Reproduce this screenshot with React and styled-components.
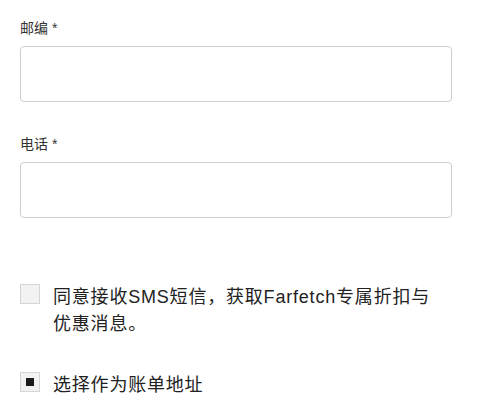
import React from "react";
import styled, { createGlobalStyle } from "styled-components";

const Global = createGlobalStyle`
  html, body { margin: 0; padding: 0; background: #fff; }
  body {
    font-family: "Liberation Sans", "Noto Sans CJK SC", sans-serif;
    color: #222;
  }
`;

const Page = styled.div`
  padding: 18px 26px 0 20px;
  display: flex;
  flex-direction: column;
`;

const Field = styled.div`
  display: flex;
  flex-direction: column;
  margin-bottom: ${(p) => p.$gap}px;
`;

const Label = styled.label`
  font-size: 14px;
  line-height: 20px;
  color: #333;
  margin-bottom: 8px;
`;

const Input = styled.input`
  box-sizing: border-box;
  height: 56px;
  width: 100%;
  border: 1px solid #cfcfcf;
  border-radius: 4px;
  background: #fff;
  padding: 0 12px;
  font: inherit;
  outline: none;
`;

const CheckRow = styled.label`
  display: flex;
  align-items: flex-start;
  gap: 13px;
  margin-bottom: ${(p) => p.$gap}px;
`;

const Box = styled.span`
  box-sizing: border-box;
  flex: 0 0 auto;
  width: 20px;
  height: 20px;
  border: 1px solid #d6d6d6;
  background: #f2f2f2;
  display: flex;
  align-items: center;
  justify-content: center;
`;

const Dot = styled.span`
  width: 8px;
  height: 8px;
  background: #1a1a1a;
`;

const CheckText = styled.span`
  font-size: 18px;
  line-height: 27px;
  letter-spacing: 0.8px;
  color: #222;
  max-width: 392px;
`;

export default function App() {
  return (
    <>
      <Global />
      <Page>
        <Field $gap={32}>
          <Label>邮编 *</Label>
          <Input type="text" />
        </Field>
        <Field $gap={66}>
          <Label>电话 *</Label>
          <Input type="tel" />
        </Field>
        <CheckRow $gap={34}>
          <Box />
          <CheckText>同意接收SMS短信，获取Farfetch专属折扣与优惠消息。</CheckText>
        </CheckRow>
        <CheckRow $gap={0}>
          <Box>
            <Dot />
          </Box>
          <CheckText>选择作为账单地址</CheckText>
        </CheckRow>
      </Page>
    </>
  );
}
